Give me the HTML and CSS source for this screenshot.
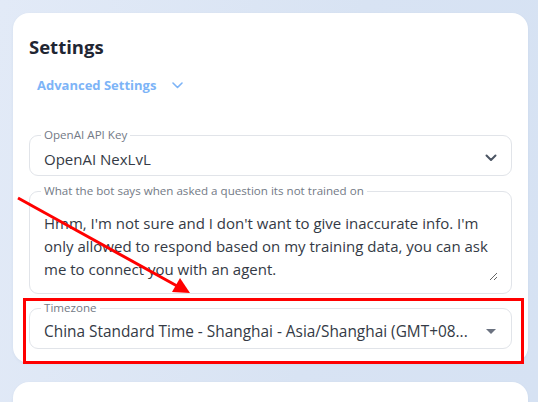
FILE: index.html
```html
<!DOCTYPE html>
<html lang="en">
<head>
<meta charset="utf-8">
<title>Settings</title>
<link rel="stylesheet" href="styles.css">
</head>
<body>
<main class="page">
  <section class="card">
    <h1 class="title">Settings</h1>
    <button class="advanced" type="button">
      <span>Advanced Settings</span>
      <svg class="adv-chev" width="11" height="7" viewBox="0 0 11 7"><polyline points="1,1 5.5,5.5 10,1" fill="none" stroke="#7db4f7" stroke-width="1.6" stroke-linecap="round" stroke-linejoin="round"/></svg>
    </button>

    <fieldset class="field field-key">
      <legend>OpenAI API Key</legend>
      <div class="select-row">
        <span class="value">OpenAI NexLvL</span>
        <svg class="chev" width="12" height="8" viewBox="0 0 12 8"><polyline points="1.5,1.5 6,6 10.5,1.5" fill="none" stroke="#4b5563" stroke-width="2" stroke-linecap="round" stroke-linejoin="round"/></svg>
      </div>
    </fieldset>

    <fieldset class="field field-text">
      <legend>What the bot says when asked a question its not trained on</legend>
      <textarea class="textarea" rows="3">Hmm, I'm not sure and I don't want to give inaccurate info. I'm
only allowed to respond based on my training data, you can ask
me to connect you with an agent.</textarea>
    </fieldset>

    <fieldset class="field field-tz">
      <legend>Timezone</legend>
      <div class="select-row">
        <span class="value value-wide">China Standard Time - Shanghai - Asia/Shanghai (GMT+08...</span>
        <svg class="caret" width="10" height="5" viewBox="0 0 10 5"><polygon points="0,0 10,0 5,5" fill="#6b7280"/></svg>
      </div>
    </fieldset>
  </section>
  <section class="card card-next"></section>
</main>
<svg class="annot" width="538" height="402" viewBox="0 0 538 402">
  <rect x="24.5" y="299.5" width="498" height="63" fill="none" stroke="#ff0000" stroke-width="3"/>
  <line x1="18" y1="198" x2="178" y2="286.5" stroke="#ff0000" stroke-width="3"/>
  <polygon points="190,293 172,292 180,278" fill="#ff0000"/>
</svg>
</body>
</html>
```
FILE: styles.css
```css
* { box-sizing: border-box; }
html, body { margin: 0; height: 100%; }
body {
  background: linear-gradient(100deg, #e2eaf7 0%, #d8e3f3 60%, #d6e2f3 100%);
  font-family: "Open Sans", "Noto Sans", sans-serif;
  overflow: hidden;
  position: relative;
}
.page {
  padding: 13px 10px 0 13px;
  display: flex;
  flex-direction: column;
  gap: 19px;
}
.card {
  background: #fff;
  border-radius: 16px;
  padding: 20px 16px 14px;
  box-shadow: 0 1px 3px rgba(30, 60, 110, 0.06);
  display: flex;
  flex-direction: column;
}
.card-next { height: 60px; }
.title {
  margin: 0;
  font-size: 18.5px;
  font-weight: 700;
  line-height: 28px;
  color: #1f2633;
}
.advanced {
  align-self: flex-start;
  margin: 12px 0 0 8px;
  padding: 0;
  border: 0;
  background: none;
  display: flex;
  align-items: center;
  gap: 16px;
  font-family: inherit;
  font-size: 13px;
  font-weight: 700;
  line-height: 24px;
  color: #7db4f7;
  cursor: pointer;
}
.field {
  margin: 0;
  border: 1px solid #e1e4e9;
  border-radius: 9px;
  padding: 5px 13px 4px 11px;
  min-width: 0;
}
.field-key { margin-top: 31px; }
.field-text { margin-top: 8px; }
.field-tz { margin-top: 7px; }
legend {
  padding: 0 3px;
  font-size: 11.6px;
  line-height: 14px;
  color: #737a86;
}
.select-row {
  display: flex;
  align-items: center;
  justify-content: space-between;
  padding-left: 3px;
  height: 24px;
}
.value {
  font-size: 15px;
  color: #343a45;
  white-space: nowrap;
  line-height: 24px;
}
.value-wide { font-size: 15.4px; }
.chev { margin-right: 1px; margin-top: -3px; }
.caret { margin-right: 2px; margin-top: -2px; }
.field-text { padding-top: 14px; padding-bottom: 12px; }
.textarea {
  display: block;
  width: 100%;
  height: 69px;
  margin: 0;
  padding: 0 0 0 3px;
  border: 0;
  outline: none;
  resize: vertical;
  overflow: hidden;
  font-family: inherit;
  font-size: 15px;
  line-height: 23px;
  color: #343a45;
  background: transparent;
  white-space: pre;
}
.annot {
  position: absolute;
  top: 0;
  left: 0;
  pointer-events: none;
}
```
